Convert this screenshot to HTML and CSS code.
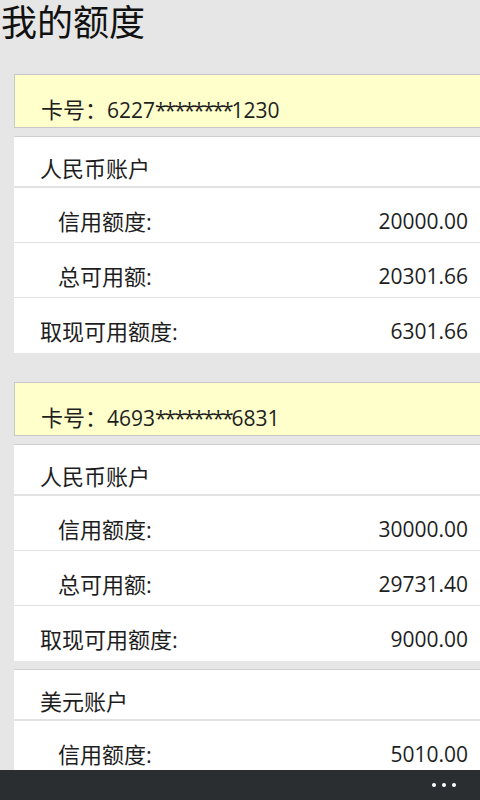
FILE: index.html
```html
<!DOCTYPE html>
<html lang="zh-CN">
<head>
<meta charset="utf-8">
<title>我的额度</title>
<link rel="stylesheet" href="styles.css">
</head>
<body>
<h1 class="title">我的额度</h1>

<section class="card">
  <div class="card-head"><span class="cjk">卡号：</span>6227<span class="mask">********</span>1230</div>
  <div class="account">
    <div class="row name"><span class="cjk">人民币账户</span></div>
    <div class="row sub"><span class="cjk">信用额度:</span><span>20000.00</span></div>
    <div class="row sub"><span class="cjk">总可用额:</span><span>20301.66</span></div>
    <div class="row"><span class="cjk">取现可用额度:</span><span>6301.66</span></div>
  </div>
</section>

<section class="card">
  <div class="card-head"><span class="cjk">卡号：</span>4693<span class="mask">********</span>6831</div>
  <div class="account">
    <div class="row name"><span class="cjk">人民币账户</span></div>
    <div class="row sub"><span class="cjk">信用额度:</span><span>30000.00</span></div>
    <div class="row sub"><span class="cjk">总可用额:</span><span>29731.40</span></div>
    <div class="row"><span class="cjk">取现可用额度:</span><span>9000.00</span></div>
  </div>
  <div class="account">
    <div class="row name"><span class="cjk">美元账户</span></div>
    <div class="row sub"><span class="cjk">信用额度:</span><span>5010.00</span></div>
  </div>
</section>

<div class="appbar"><span class="dot"></span><span class="dot"></span><span class="dot"></span></div>
</body>
</html>
```

FILE: styles.css
```css
html, body {
  margin: 0;
  padding: 0;
  height: 800px;
  overflow: hidden;
  background: #e6e6e6;
}
body {
  font-family: "Open Sans", "Noto Sans CJK SC", sans-serif;
  color: #1e1e1e;
  font-size: 21px;
}
.cjk {
  font-size: 22px;
}
.mask {
  letter-spacing: -2px;
}
.title {
  margin: 0;
  padding-left: 1px;
  font-size: 36px;
  font-weight: normal;
  line-height: 46px;
  height: 46px;
  color: #111;
}
.card {
  margin: 28px 0 0 14px;
}
.card + .card {
  margin-top: 29px;
}
.card-head {
  box-sizing: border-box;
  height: 54px;
  background: #ffffcc;
  border: 1px solid #c8c8c8;
  border-right: none;
  padding: 22px 0 0 26px;
  line-height: 24px;
}
.account {
  margin-top: 8px;
  border-top: 1px solid #cfcfcf;
  background: #fff;
}
.row {
  box-sizing: border-box;
  height: 55px;
  padding: 21px 12px 0 26px;
  line-height: 24px;
  display: flex;
  justify-content: space-between;
  border-bottom: 1px solid #e2e2e2;
}
.row:last-child {
  border-bottom: none;
}
.row.name {
  height: 51px;
  padding-top: 19px;
  border-bottom-width: 2px;
}
.row.sub {
  padding-left: 44px;
}
.appbar {
  position: fixed;
  left: 0;
  right: 0;
  bottom: 0;
  height: 30px;
  background: #2b2e30;
  display: flex;
  justify-content: flex-end;
  align-items: center;
  gap: 6px;
  padding-right: 24px;
}
.dot {
  width: 4px;
  height: 4px;
  border-radius: 50%;
  background: #fff;
}
```
